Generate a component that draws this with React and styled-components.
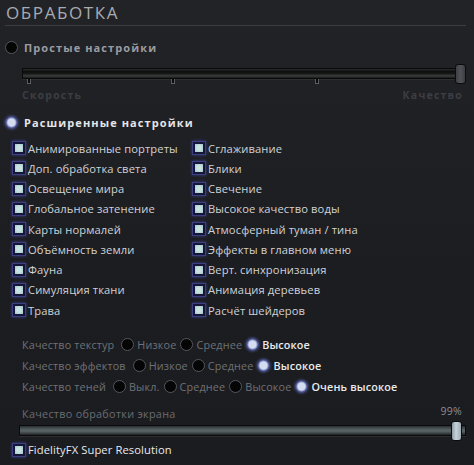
import React from 'react'
import styled, {createGlobalStyle, css} from 'styled-components'

const Global = createGlobalStyle`
	html, body { margin: 0; padding: 0; background: #1d1e21; }
	body { font-family: "Open Sans", "Noto Sans", sans-serif; }
`

const Page = styled.div`
	width: 474px;
	height: 465px;
	box-sizing: border-box;
	padding: 3px 8px 0 5px;
	background: linear-gradient(180deg, #222327 0%, #1c1d20 60%, #1b1c1f 100%);
	overflow: hidden;
`
const Title = styled.div`
	font-size: 17px;
	letter-spacing: 1.6px;
	color: #a9abb2;
	font-weight: 400;
	line-height: 20px;
	padding: 0 0 2px 1px;
	border-bottom: 1px solid #3b3d42;
	margin-bottom: 14px;
`
const ModeRow = styled.div`
	display: flex;
	align-items: center;
	gap: 6px;
	height: 14px;
	font-size: 11px;
	font-weight: 700;
	letter-spacing: 1.1px;
	color: ${p => p.$active ? '#e4e6ea' : '#9a9ca2'};
`
const Radio = styled.span`
	box-sizing: border-box;
	width: ${p => p.$size || 13}px;
	height: ${p => p.$size || 13}px;
	border-radius: 50%;
	flex: none;
	background: #050506;
	border: 1px solid #55575d;
	${p => p.$on && css`
		background: radial-gradient(circle, #d4dcf2 0 45%, #8b95c8 60%, #242a55 78%);
		border: 1px solid #4b5590;
		box-shadow: 0 0 3px #5b63b8;
	`}
`
const SliderWrap = styled.div`
	padding: ${p => p.$pad || '0'};
`
const Track = styled.div`
	position: relative;
	height: 11px;
	box-sizing: border-box;
	border: 1px solid #0a0a0b;
	background: ${p => p.$fill
		? 'linear-gradient(180deg, #2a2e30 0%, #4b5457 30%, #5c6568 55%, #3c4345 80%, #1e2122 100%)'
		: 'linear-gradient(180deg, #2a2c2c 0%, #0c0d0d 30%, #1a1c1b 55%, #3a3d3c 75%, #1a1b1b 100%)'};
	box-shadow: 0 1px 0 #2c2e31;
`
const Tick = styled.span`
	position: absolute;
	top: 10px;
	width: 4px;
	height: 5px;
	box-sizing: border-box;
	border: 1px solid #5a5c60;
	border-top: none;
	background: #0b0b0c;
`
const Thumb = styled.span`
	position: absolute;
	right: -1px;
	top: -5px;
	width: 11px;
	height: 20px;
	border-radius: 3px;
	box-sizing: border-box;
	border: 1px solid #0c0c0d;
	background: ${p => p.$light
		? 'linear-gradient(90deg, #8c9aa4, #c7d3db 45%, #9eabb4)'
		: 'linear-gradient(90deg, #3e4044, #505257 50%, #3c3e42)'};
`
const SliderLabels = styled.div`
	display: flex;
	justify-content: space-between;
	margin-top: 9px;
	font-size: 10.5px;
	font-weight: 700;
	letter-spacing: 1.2px;
	color: #3c3e43;
	line-height: 14px;
`
const Spacer = styled.div`
	height: ${p => p.$h}px;
`
const Grid = styled.div`
	display: grid;
	grid-template-columns: 180px 1fr;
	grid-auto-rows: 20.25px;
	padding: 9px 0 0 8px;
`
const Check = styled.label`
	display: flex;
	align-items: center;
	gap: 3px;
	font-size: 11.2px;
	letter-spacing: 0.1px;
	color: ${p => p.$bright ? '#e8eaee' : '#d0d2d7'};
	white-space: nowrap;
`
const Box = styled.span`
	box-sizing: border-box;
	width: 12px;
	height: 12px;
	flex: none;
	border: 2px solid #15163a;
	outline: 1px solid #3d4080;
	box-shadow: 0 0 3px 1px #3b3f8c;
	background: radial-gradient(circle, #c8e2e2 0 40%, #a3c4c6 100%);
`
const Options = styled.div`
	display: flex;
	flex-direction: column;
	gap: 7px;
	padding: 17px 0 0 17px;
`
const OptRow = styled.div`
	display: flex;
	align-items: center;
	gap: 4px;
	height: 14px;
	font-size: 10.8px;
	letter-spacing: 0.15px;
	color: #6f7177;
	white-space: nowrap;
`
const OptName = styled.span`
	margin-right: 3px;
`
const Opt = styled.span`
	display: flex;
	align-items: center;
	gap: 3px;
	color: ${p => p.$on ? '#e9ebef' : '#6f7177'};
	font-weight: ${p => p.$on ? 600 : 400};
`
const ScreenHead = styled.div`
	display: flex;
	justify-content: space-between;
	align-items: flex-end;
	padding: 11px 4px 0 17px;
	font-size: 10.8px;
	letter-spacing: 0.3px;
	color: #6a6c72;
	line-height: 14px;
`
const Percent = styled.span`
	color: #8d8f95;
	font-size: 10.5px;
	margin-bottom: 3px;
`
const Footer = styled.div`
	padding: 6px 0 0 8px;
`

const left = ['Анимированные портреты', 'Доп. обработка света', 'Освещение мира', 'Глобальное затенение', 'Карты нормалей', 'Объёмность земли', 'Фауна', 'Симуляция ткани', 'Трава']
const right = ['Сглаживание', 'Блики', 'Свечение', 'Высокое качество воды', 'Атмосферный туман / тина', 'Эффекты в главном меню', 'Верт. синхронизация', 'Анимация деревьев', 'Расчёт шейдеров']

const quality = [
	{name: 'Качество текстур', opts: ['Низкое', 'Среднее', 'Высокое'], on: 2},
	{name: 'Качество эффектов', opts: ['Низкое', 'Среднее', 'Высокое'], on: 2},
	{name: 'Качество теней', opts: ['Выкл.', 'Среднее', 'Высокое', 'Очень высокое'], on: 3},
]

export default function App(){
	const cells = []
	left.forEach((l, i) => { cells.push(l, right[i]) })
	return (
		<>
			<Global />
			<Page>
				<Title>ОБРАБОТКА</Title>
				<ModeRow><Radio /> Простые настройки</ModeRow>
				<SliderWrap $pad="14px 0 0 17px">
					<Track>
						<Tick style={{left: 4}} />
						<Tick style={{left: 148}} />
						<Tick style={{left: 292}} />
						<Thumb />
					</Track>
					<SliderLabels><span>Скорость</span><span style={{marginRight: 3}}>Качество</span></SliderLabels>
				</SliderWrap>
				<Spacer $h={13} />
				<ModeRow $active><Radio $on /> Расширенные настройки</ModeRow>
				<Grid>
					{cells.map(c => <Check key={c}><Box />{c}</Check>)}
				</Grid>
				<Options>
					{quality.map(q => (
						<OptRow key={q.name}>
							<OptName>{q.name}</OptName>
							{q.opts.map((o, i) => (
								<Opt key={o} $on={i === q.on}><Radio $on={i === q.on} $size={13} />{o}</Opt>
							))}
						</OptRow>
					))}
				</Options>
				<ScreenHead><span>Качество обработки экрана</span><Percent>99%</Percent></ScreenHead>
				<SliderWrap $pad="4px 0 0 14px">
					<Track $fill><Thumb $light style={{right: 3}} /></Track>
				</SliderWrap>
				<Footer>
					<Check $bright><Box />FidelityFX Super Resolution</Check>
				</Footer>
			</Page>
		</>
	)
}
